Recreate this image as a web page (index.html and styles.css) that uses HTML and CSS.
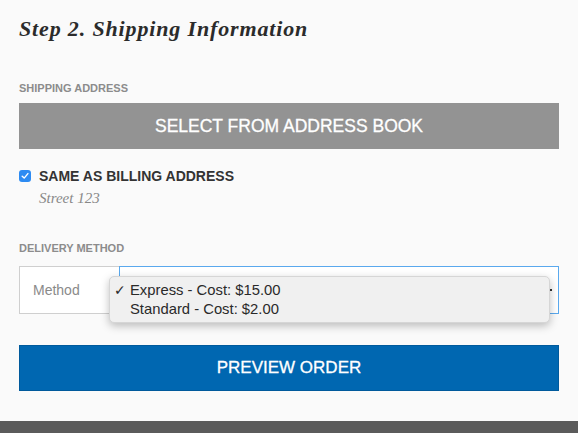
FILE: index.html
```html
<!DOCTYPE html>
<html>
<head>
<meta charset="utf-8">
<link rel="stylesheet" href="styles.css">
</head>
<body>
<div class="page">
  <h1 class="title">Step 2. Shipping Information</h1>
  <div class="section-label label-shipping">SHIPPING ADDRESS</div>
  <div class="btn btn-gray">SELECT FROM ADDRESS BOOK</div>
  <div class="check-row">
    <span class="checkbox"><svg width="8" height="8" viewBox="0 0 8 8"><path d="M1.2 4.2 L3.2 6.1 L6.9 1.6" fill="none" stroke="#fff" stroke-width="1.4" stroke-linecap="round" stroke-linejoin="round"/></svg></span>
    <span class="check-label">SAME AS BILLING ADDRESS</span>
  </div>
  <div class="street">Street 123</div>
  <div class="section-label label-delivery">DELIVERY METHOD</div>
  <div class="input-group">
    <div class="addon">Method</div>
    <div class="select">
      <span class="caret"></span>
      <div class="popup">
        <div class="opt"><span class="tick">✓</span>Express - Cost: $15.00</div>
        <div class="opt"><span class="tick"></span>Standard - Cost: $2.00</div>
      </div>
    </div>
  </div>
  <div class="btn btn-blue">PREVIEW ORDER</div>
</div>
<div class="footer"></div>
</body>
</html>
```
FILE: styles.css
```css
html, body {
  margin: 0;
  padding: 0;
  background: #fafafa;
  height: 100%;
}
body {
  display: flex;
  flex-direction: column;
  font-family: "Liberation Sans", Arial, sans-serif;
  overflow: hidden;
}
.page {
  padding: 0 19px;
  height: 421px;
  box-sizing: border-box;
}
.title {
  margin: 0;
  padding-top: 17px;
  font-family: "Liberation Serif", Georgia, serif;
  font-style: italic;
  font-weight: bold;
  font-size: 22px;
  line-height: 24px;
  color: #2b2b2b;
  letter-spacing: 0.85px;
}
.section-label {
  font-size: 11px;
  font-weight: bold;
  color: #8c8c8c;
  line-height: 12px;
}
.label-shipping {
  margin-top: 41px;
}
.btn {
  display: flex;
  align-items: center;
  justify-content: center;
  height: 46px;
  color: #fff;
  font-size: 17.5px;
  box-sizing: border-box;
  -webkit-text-stroke: 0.3px #fff;
}
.btn-gray {
  margin-top: 9px;
  background: #939393;
}
.check-row {
  display: flex;
  align-items: center;
  margin-top: 21px;
  height: 12px;
}
.checkbox {
  width: 12px;
  height: 12px;
  border-radius: 3px;
  background: #2d8bf2;
  display: flex;
  align-items: center;
  justify-content: center;
}
.check-label {
  margin-left: 8px;
  font-size: 14px;
  font-weight: bold;
  color: #333;
}
.street {
  margin-top: 8px;
  padding-left: 20px;
  font-family: "Liberation Serif", Georgia, serif;
  font-style: italic;
  font-size: 15px;
  line-height: 16px;
  color: #888;
}
.label-delivery {
  margin-top: 36px;
}
.input-group {
  display: flex;
  margin-top: 12px;
  height: 48px;
}
.addon {
  width: 100px;
  box-sizing: border-box;
  border: 1px solid #cfcfcf;
  border-right: none;
  background: #fff;
  display: flex;
  align-items: center;
  padding-left: 13px;
  font-size: 14px;
  color: #8a8a8a;
}
.select {
  flex: 1;
  position: relative;
  border: 1px solid #5aa9ee;
  background: #fff;
}
.caret {
  position: absolute;
  right: 6px;
  top: 22px;
  width: 2px;
  height: 2px;
  background: #333;
}
.popup {
  position: absolute;
  left: -11px;
  top: 9px;
  width: 441px;
  height: 47px;
  box-sizing: border-box;
  background: #f0f0f0;
  border-radius: 5px;
  border: 1px solid #d6d6d6;
  box-shadow: 0 3px 9px rgba(0,0,0,0.25);
  padding-top: 4px;
  font-size: 14.8px;
  color: #2a2a2a;
}
.opt {
  display: flex;
  align-items: center;
  height: 19px;
  line-height: 19px;
}
.tick {
  width: 20px;
  padding-left: 4px;
  box-sizing: border-box;
  font-family: "DejaVu Sans", sans-serif;
  font-size: 14px;
}
.btn-blue {
  margin-top: 31px;
  background: #0067b1;
  border: 1px solid #005a9c;
  font-size: 17px;
}
.footer {
  height: 12px;
  background: #5b5b5b;
  flex: 1;
}
```
